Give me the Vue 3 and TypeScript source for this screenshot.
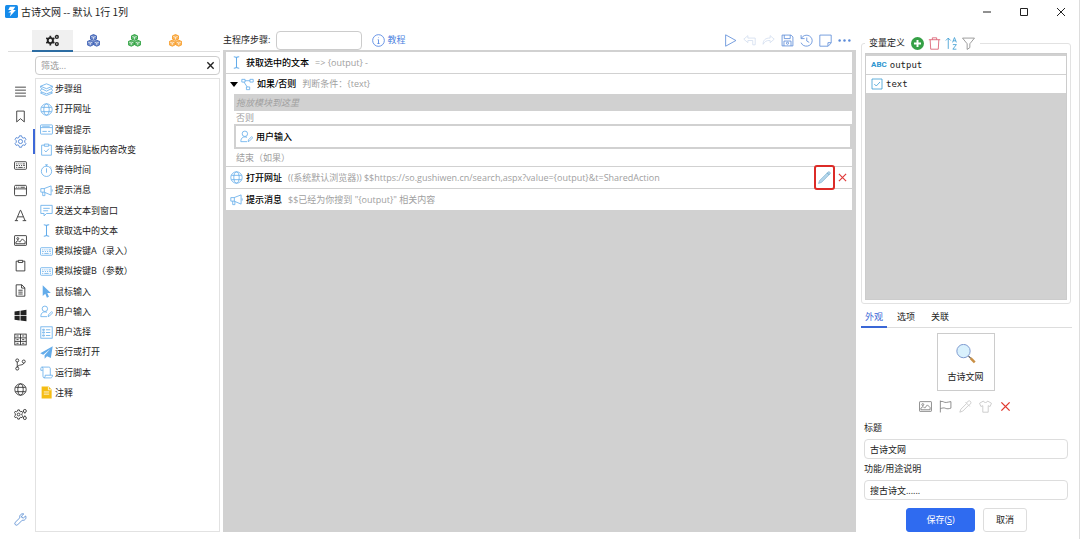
<script setup lang="ts">
import { ref } from 'vue'

const icons: Record<string, string> = {
  menu: '<path d="M2 4h20M2 9.500h20M2 15h20M2 20.500h20"/>',
  bookmark: '<path d="M5 2h14v20l-7-6-7 6z"/>',
  gear: '<path d="M10 1.500h4l.8 3 2.200 1.200 3-.9 2 3.500-2.200 2.200v2.900l2.200 2.300-2 3.500-3-.9-2.200 1.300-.8 3h-4l-.8-3L7 18.300l-3 .9-2-3.500 2.200-2.300v-2.900L2 8.300l2-3.500 3 .9 2.200-1.200z"/><circle cx="12" cy="12" r="3.800"/>',
  keyboard: '<rect x="1" y="5" width="22" height="14" rx="1.500"/><path d="M4 9h2M8 9h2M12 9h2M16 9h4M4 12h3M9 12h2M13 12h2M17 12h3M4 15.500h2M8 15.500h8M18 15.500h2"/>',
  window: '<rect x="1" y="2.500" width="22" height="19" rx="2"/><path d="M1 9h22M4 6h2M8 6h2M12 6h8"/>',
  letter: '<path d="M3.500 21.500L11.500 2.500h1l8 19M7 14.500h10M1.500 21.500h6M16 21.500h6.500"/>',
  image: '<rect x="1" y="3" width="22" height="18" rx="1"/><circle cx="7" cy="8.500" r="1.800"/><path d="M3.500 18v-3l4-3 3 3 5-6 5 5v4z"/>',
  clipboard: '<path d="M8 4H4v18h16V4h-4M8 2.500h8v4H8z"/>',
  doc: '<path d="M4 1.500h10.500L20 7v15.500H4zM14 1.500V7.500h6M8 11.500h8M8 15h8M8 18.500h8"/>',
  windows: '<path fill="currentColor" stroke="none" d="M1 4.500l9.500-1.300v8.200H1zM12 3l11-1.600v10H12zM1 12.800h9.500V21L1 19.700zM12 12.800h11v9.900L12 21.200z"/>',
  panel: '<rect x="1.500" y="2" width="21" height="20"/><path d="M1.500 9h21M1.500 15.500h21M12 2v20M4.500 5.500h4M15 5.500h4M4.500 12.200h4M15 12.200h4M4.500 19h4M15 19h4"/>',
  branch: '<circle cx="6" cy="4.500" r="2.800"/><circle cx="6" cy="19.500" r="2.800"/><circle cx="18" cy="6.500" r="2.800"/><path d="M6 7.300v9.400M18 9.300c0 5-11 2-11.500 7.500"/>',
  globe: '<circle cx="12" cy="12" r="10.500"/><ellipse cx="12" cy="12" rx="5" ry="10.500"/><path d="M2.500 8h19M2.500 16h19"/>',
  gears: '<path d="M7 3.500h3l.6 2.400 1.900 1 2.300-.7 1.500 2.600-1.800 1.800v2.800l1.800 1.800-1.500 2.600-2.300-.7-1.900 1-.6 2.400H7l-.6-2.400-1.900-1-2.300.7L.8 15.200l1.700-1.800v-2.800L.8 8.800l1.400-2.600 2.300.7 1.900-1z"/><circle cx="8.500" cy="12" r="2.600"/><circle cx="20" cy="5.500" r="2.800"/><circle cx="20" cy="18.500" r="2.800"/><path d="M20 8.300v2M20 13.700v2"/>',
  gearsBold: '<g stroke-width="3.500"><circle cx="8" cy="12" r="4.800"/></g><path stroke-width="3.200" d="M8 3v3M8 18v3M.5 7.600l3 1.600M.5 16.400l3-1.600M15.500 7.600l-3 1.600M15.500 16.400l-3-1.600"/><g stroke-width="2.600"><circle cx="20" cy="5.500" r="2.600"/><circle cx="20" cy="18.500" r="2.600"/></g>',
  cubes: '<path fill="currentColor" fill-opacity=".7" d="M12 1l5.500 2.400v6L12 11.800 6.500 9.400v-6zM6 11.500l5.500 2.400v6.100L6 22.500.5 20v-6.100zM18 11.500l5.500 2.400v6.100L18 22.500 12.500 20v-6.100z"/><path stroke="#fff" stroke-width="1.200" d="M8 4.500l4 1.700 4-1.700M12 6.200v4M2 15l4 1.700L10 15M6 16.700v4M14 15l4 1.700 4-1.700M18 16.700v4"/>',
  wrench: '<path d="M21.500 5.500l-4 3.500-3-.5L14 5.500l4-3.700c-4-1.500-8.500 2-7.200 7L2 17.500c-2 3 1.500 6.500 4.500 4.500l8.700-8.700c5 1.200 8.300-3.300 6.300-7.800zM4.500 19.500h.2"/>',
  layers: '<path d="M12 1.500l11 4.500-11 4.500L1 6zM1 6c0 3 1 4 3 5-2 1-3 1-3 2 0 2 1 3 3 4-2 .5-3 1-3 1.500l11 4.500 11-4.500c0-.5-1-1-3-1.500 2-1 3-2 3-4 0-1-1-1-3-2 2-1 3-2 3-5M4 11l8 4 8-4M4 17l8 3 8-3"/>',
  dialog: '<rect x="1" y="3.500" width="22" height="17" rx="1"/><path d="M1 8.500h22M4 6h14M4.500 15.500h8M15 15.500h4"/>',
  clipCheck: '<path d="M8 4H3v18.500h18V4h-5M8 2h8v4H8zM8 13.500l3 3 5.500-6"/>',
  timer: '<circle cx="12" cy="13.500" r="9.500"/><path d="M12 8v8M9.500 1.500h5M12 1.500v3M19 5l2 2"/>',
  horn: '<path d="M1.500 8.500v6.500h6l13 5.500v-17l-13 5zM5 15v6.500h4V15.500M8 8.500V15M22.500 10v4"/>',
  chat: '<path d="M1.500 2.500h21v15H12L7.500 22v-4.500h-6zM6 8h12M6 12.500h9"/>',
  ibeam: '<path stroke-width="1.900" d="M7 1.500c3 0 5 .5 5 2.500 0-2 2-2.500 5-2.500M12 4v16M7 22.500c3 0 5-.5 5-2.500 0 2 2 2.500 5 2.500"/>',
  cursor: '<path fill="currentColor" stroke="none" d="M5 .5v20l4.800-4.500 3 7.500 3.700-1.600-3-7.200h6.500z"/>',
  userEdit: '<circle cx="9" cy="7" r="5"/><path d="M13 13.500c-6-2-11.500 0-11.500 8H13M15 21.500l.6-3.300 6-6 2 2-6 6z"/>',
  options: '<rect x="1.500" y="1.500" width="21" height="21"/><path d="M5 6h3v2H5zM5 11h3v2H5zM5 16.500h3v2H5zM11 7h8M11 12h8M11 17.500h8"/>',
  plane: '<path fill="currentColor" stroke="none" d="M23.500.5L20 22l-7-3-4.500 4.500v-6.300L19 5.500 6 16 .5 13.500z"/>',
  scroll: '<path d="M5 8H1.500V5c0-4 4-4 4-.5V19c0 3.500 4 3.500 4 0v-2H23c0 3-1 5-3.500 5H7M3.500 2H16c2 0 3 1 3 3v12"/>',
  note: '<path fill="currentColor" stroke="none" d="M3 1h13l5.500 5.500V23H3z"/><path stroke="#fff" d="M15.500 1.500V7H21M7 11h10M7 15h10"/>',
  flow: '<path d="M1.500 2.500h6v5h-6zM16.500 2.500h6v5h-6zM10 16.500h6v5h-6zM7.500 5h9M5.500 7.500l6 9"/>',
  info: '<circle cx="12" cy="12" r="10.800"/><path d="M12 10.500v7M10 17.500h4M10.500 10.500H12M12 6.500v1"/>',
  play: '<path d="M3 1.500l19 10.500L3 22.500z"/>',
  undo: '<path d="M9 3L1.500 9.500 9 16v-4h9v8h4.500V7.500H9z"/>',
  redo: '<path d="M15 3l7.500 6.500L15 16v-4c-7-.5-10 2-13 7 0-7 4-12 13-11.500z"/>',
  save: '<path d="M2 2h16.500L22 5.500V22H2zM6 2v6.500h11V2M5.500 22v-9h13v9"/><circle cx="12" cy="17" r="2"/>',
  history: '<path d="M2 2v6.500h6.500M2.500 8C8-2 22.500 2 22.500 12.500 22 24 6 26 2 16M12.500 6.500v6.500l4.500 2.500"/>',
  sticky: '<path d="M1.500 2h21v14.500L17 22.500H1.500zM16.500 22V16H22"/>',
  dots: '<g fill="currentColor" stroke="none"><circle cx="3" cy="12" r="2.300"/><circle cx="12" cy="12" r="2.300"/><circle cx="21" cy="12" r="2.300"/></g>',
  plus: '<circle cx="12" cy="12" r="12" fill="currentColor" stroke="none"/><path stroke="#fff" stroke-width="3.600" d="M12 5.500v13M5.500 12h13"/>',
  trash: '<path d="M1.500 5h21M4 5l1 17.500h14L20 5M8 5V1.500h8V5"/>',
  sort: '<path d="M6 22V2M1.500 6.500L6 2l4.500 4.500M14 10l3.500-9L21 10M15 7h5M14.500 14H21l-6.500 8.500H21"/>',
  filter: '<path d="M1 2h22l-8.500 10.500v7L9.500 23V12.500z"/>',
  flag: '<path d="M2.500 1v22M2.500 3c5-2 7 2.500 11 1.500 3-.5 5-1 8.500-1.500v12c-4 1.500-7 1.500-9.500.5-3.500-1.500-6-1-10 .5"/>',
  dropper: '<path d="M14 5.500l3-3.500c3-2 6.500 2 4.500 5L18 10M12 4l8 8M14 6.500L3.500 17 1.500 22.500 7 20.500 17.500 10"/>',
  shirt: '<path d="M8 2L1 6l2.500 6L7 10.500V22.500h10V10.500l3.500 1.500L23 6l-7-4c-1 3.500-7 3.500-8 0z"/>',
  cross: '<path stroke-width="3" d="M3 3l18 18M21 3L3 21"/>',
  check: '<path d="M2 2h20v20H2zM6.500 12l4 4 7.500-8"/>',
  pencil: '<path fill="#b5d6ea" stroke="#7fb2d0" stroke-width="1.200" d="M1 23l2-5.500L19 1.500c2-1 4.500 1.500 3.500 3.500L6.500 21z"/><path stroke="#5d9fc4" d="M17 3.500L20.500 7"/>',
  magnifier: '<path stroke="#c98f45" stroke-width="3" d="M17.500 17l5 5"/><path stroke="#555" stroke-width="1.500" d="M15 14.500l2.500 2.500"/><circle cx="9" cy="8.500" r="8" fill="#d9f1fd" stroke="#7f9bd0" stroke-width="1.200"/>',
}

const rail = ['menu', 'bookmark', 'gear', 'keyboard', 'window', 'letter', 'image', 'clipboard', 'doc', 'windows', 'panel', 'branch', 'globe', 'gears']
const modules = [
  { icon: 'layers', name: '步骤组' },
  { icon: 'globe', name: '打开网址' },
  { icon: 'dialog', name: '弹窗提示' },
  { icon: 'clipCheck', name: '等待剪贴板内容改变' },
  { icon: 'timer', name: '等待时间' },
  { icon: 'horn', name: '提示消息' },
  { icon: 'chat', name: '发送文本到窗口' },
  { icon: 'ibeam', name: '获取选中的文本' },
  { icon: 'keyboard', name: '模拟按键A（录入）' },
  { icon: 'keyboard', name: '模拟按键B（参数）' },
  { icon: 'cursor', name: '鼠标输入' },
  { icon: 'userEdit', name: '用户输入' },
  { icon: 'options', name: '用户选择' },
  { icon: 'plane', name: '运行或打开' },
  { icon: 'scroll', name: '运行脚本' },
  { icon: 'note', name: '注释' },
]
const sources = [
  { icon: 'gearsBold', tone: 'dark' },
  { icon: 'cubes', tone: 'blue' },
  { icon: 'cubes', tone: 'green' },
  { icon: 'cubes', tone: 'orange' },
]
const tools = ['play', 'undo', 'redo', 'save', 'history', 'sticky', 'dots']
const varTools = ['plus', 'trash', 'sort', 'filter']
const looks = ['image', 'flag', 'dropper', 'shirt', 'cross']
const tabs = ['外观', '选项', '关联']

const source = ref(0)
const category = ref('gear')
const tab = ref('外观')
const query = ref('')
const program = ref('')
const title = ref('古诗文网')
const description = ref('搜古诗文......')
const urlDetail = '((系统默认浏览器)) $$https://so.gushiwen.cn/search,aspx?value={output}&t=SharedAction'
const messageDetail = '$$已经为你搜到 "{output}" 相关内容'
</script>

<template>
  <div class="app">
    <header class="titlebar">
      <svg class="logo" viewBox="0 0 24 24">
        <rect width="24" height="24" rx="3" fill="#168bea" />
        <path fill="#fff" d="M9 3h10l-4 6h5L9 21l2-7H6l6-5H6z" />
      </svg>
      <h1>古诗文网 -- 默认 1行 1列</h1>
      <div class="win">
        <button aria-label="最小化"><svg viewBox="0 0 10 10"><path d="M1 5h8" /></svg></button>
        <button aria-label="最大化"><svg viewBox="0 0 10 10"><path d="M1.500 1.500h7v7h-7z" /></svg></button>
        <button aria-label="关闭"><svg viewBox="0 0 10 10"><path d="M1 1l8 8M9 1L1 9" /></svg></button>
      </div>
    </header>

    <main class="body">
      <aside class="left">
        <nav class="sources">
          <button v-for="(s, i) in sources" :key="i" :class="[s.tone, { on: source === i }]" :aria-label="s.tone" @click="source = i">
            <svg class="ic" viewBox="0 0 24 24" v-html="icons[s.icon]" />
          </button>
        </nav>
        <div class="picker">
          <nav class="rail">
            <div class="cats">
              <button v-for="r in rail" :key="r" :class="{ on: category === r }" :aria-label="r" @click="category = r">
                <svg class="ic" viewBox="0 0 24 24" v-html="icons[r]" />
              </button>
            </div>
            <button class="settings" aria-label="设置"><svg class="ic" viewBox="0 0 24 24" v-html="icons.wrench" /></button>
          </nav>
          <div class="palette">
            <div class="search">
              <input v-model="query" type="text" placeholder="筛选..." aria-label="筛选" />
              <button aria-label="清除" @click="query = ''"><svg viewBox="0 0 10 10"><path d="M1.500 1.500l7 7M8.500 1.500l-7 7" /></svg></button>
            </div>
            <div class="modulebox">
              <ul class="modules">
                <li v-for="m in modules" :key="m.name">
                  <svg class="ic" :class="m.icon" viewBox="0 0 24 24" v-html="icons[m.icon]" />{{ m.name }}
                </li>
              </ul>
            </div>
          </div>
        </div>
      </aside>

      <section class="center">
        <div class="toolbar">
          <label for="program">主程序步骤:</label>
          <input id="program" v-model="program" type="text" />
          <a href="#"><svg class="ic" viewBox="0 0 24 24" v-html="icons.info" />教程</a>
          <div class="tools">
            <button v-for="t in tools" :key="t" :class="t" :aria-label="t"><svg class="ic" viewBox="0 0 24 24" v-html="icons[t]" /></button>
          </div>
        </div>
        <div class="steps">
          <div class="step">
            <svg class="ic" viewBox="0 0 24 24" v-html="icons.ibeam" />
            <b>获取选中的文本</b><span>=&gt; {output} -</span>
          </div>
          <div class="branch">
            <div class="step cond">
              <i class="caret"></i>
              <svg class="ic" viewBox="0 0 24 24" v-html="icons.flow" />
              <b>如果/否则</b><span>判断条件：{text}</span>
            </div>
            <div class="drop">拖放模块到这里</div>
            <div class="mark">否则</div>
            <div class="nested">
              <svg class="ic" viewBox="0 0 24 24" v-html="icons.userEdit" /><b>用户输入</b>
            </div>
            <div class="mark end">结束（如果）</div>
          </div>
          <div class="step">
            <svg class="ic" viewBox="0 0 24 24" v-html="icons.globe" />
            <b>打开网址</b><span>{{ urlDetail }}</span>
            <button class="edit" aria-label="编辑"><svg class="ic" viewBox="0 0 24 24" v-html="icons.pencil" /></button>
            <button class="remove" aria-label="删除"><svg viewBox="0 0 10 10"><path d="M1 1l8 8M9 1L1 9" /></svg></button>
          </div>
          <div class="step">
            <svg class="ic" viewBox="0 0 24 24" v-html="icons.horn" />
            <b>提示消息</b><span>{{ messageDetail }}</span>
          </div>
        </div>
      </section>

      <aside class="right">
        <fieldset>
          <legend>
            变量定义
            <button v-for="v in varTools" :key="v" :class="v" :aria-label="v"><svg class="ic" viewBox="0 0 24 24" v-html="icons[v]" /></button>
          </legend>
          <ul class="vars">
            <li><em>ABC</em>output</li>
            <li><svg class="ic" viewBox="0 0 24 24" v-html="icons.check" />text</li>
          </ul>
        </fieldset>
        <nav class="tabs">
          <button v-for="t in tabs" :key="t" :class="{ on: tab === t }" @click="tab = t">{{ t }}</button>
        </nav>
        <div class="preview">
          <svg class="ic" viewBox="0 0 24 24" v-html="icons.magnifier" />
          {{ title }}
        </div>
        <div class="looks">
          <button v-for="l in looks" :key="l" :class="l" :aria-label="l"><svg class="ic" viewBox="0 0 24 24" v-html="icons[l]" /></button>
        </div>
        <label for="title">标题</label>
        <input id="title" v-model="title" type="text" />
        <label for="desc">功能/用途说明</label>
        <input id="desc" v-model="description" type="text" />
        <div class="actions">
          <button class="primary">保存(<u>S</u>)</button>
          <button>取消</button>
        </div>
      </aside>
    </main>
  </div>
</template>

<style>
body {
  margin: 0;
  background: #fff;
}
</style>

<style scoped>
* {
  box-sizing: border-box;
}
.app {
  display: flex;
  flex-direction: column;
  min-height: 100vh;
  border-right: 1px solid #ddd;
  font: 9px/14px "Open Sans", "Noto Sans CJK SC", sans-serif;
  color: #222;
}
button {
  display: flex;
  align-items: center;
  justify-content: center;
  padding: 0;
  border: 0;
  background: none;
  font: inherit;
  color: inherit;
}
input {
  min-width: 0;
  padding: 0 5px;
  border: 1px solid #ccc;
  border-radius: 4px;
  background: #fff;
  font: inherit;
  color: inherit;
  outline: 0;
}
ul {
  margin: 0;
  padding: 0;
  list-style: none;
}
svg {
  flex: none;
  fill: none;
  stroke: currentColor;
}
.ic {
  width: 13px;
  height: 13px;
  stroke-width: 1.5;
}

.titlebar {
  display: flex;
  align-items: center;
  height: 23px;
  padding: 0 13px 0 5px;
}
.logo {
  width: 13px;
  height: 13px;
  margin-right: 3px;
  stroke: none;
}
h1 {
  flex: 1;
  margin: 0;
  font-family: "Noto Sans CJK SC", sans-serif;
  font-size: 10px;
  font-weight: 400;
}
.win {
  display: flex;
  gap: 27px;
}
.win svg {
  width: 10px;
  height: 10px;
}

.body {
  display: flex;
  flex: 1;
  padding: 7px 7px 8px 8px;
}
.left {
  display: flex;
  flex-direction: column;
  width: 212px;
}
.sources {
  display: flex;
  height: 22px;
  padding-left: 24px;
  border-bottom: 1px solid #ddd;
}
.sources button {
  width: 41px;
  height: 22px;
  border-bottom: 2px solid transparent;
}
.sources .on {
  border-color: #2d6da3;
  background: #f0f0f0;
}
.blue { color: #2f55b0; }
.green { color: #1c9a30; }
.orange { color: #f7961a; }

.picker {
  display: flex;
  flex: 1;
}
.rail {
  display: flex;
  flex-direction: column;
  justify-content: space-between;
  width: 27px;
  padding: 27px 0 6px;
}
.cats {
  display: grid;
  grid-auto-rows: 1fr;
  height: 348px;
}
.rail button {
  border-right: 2px solid transparent;
}
.rail .on {
  border-color: #3d68d8;
  color: #3d78d0;
}
.rail .settings {
  color: #4f86cf;
}
.palette {
  display: flex;
  flex: 1;
  flex-direction: column;
  gap: 3px;
  padding-top: 4px;
}
.search {
  position: relative;
  display: flex;
}
.search input {
  width: 100%;
  height: 19px;
}
.search input::placeholder {
  color: #999;
}
.search button {
  position: absolute;
  top: 0;
  right: 5px;
  bottom: 0;
}
.search svg {
  width: 9px;
  height: 9px;
  stroke-width: 1.5;
}
.modulebox {
  flex: 1;
  border: 1px solid #e2e2e2;
}
.modules {
  display: grid;
  grid-auto-rows: 1fr;
  height: 324px;
  padding-left: 4px;
}
.modules li {
  display: flex;
  align-items: center;
  gap: 2px;
}
.modules .ic,
.steps .ic {
  color: #64acea;
}
.modules .note {
  color: #f5bd13;
}

.center {
  display: flex;
  flex: 1;
  flex-direction: column;
  min-width: 0;
  margin: 0 5px 0 3px;
}
.toolbar {
  display: flex;
  align-items: center;
  height: 20px;
}
.toolbar input {
  width: 86px;
  height: 19px;
  margin: 0 10px 0 6px;
}
.toolbar a {
  display: flex;
  align-items: center;
  gap: 2px;
  color: #4a7fe0;
  text-decoration: none;
}
.tools {
  display: flex;
  gap: 6px;
  margin-left: auto;
  padding-right: 5px;
  color: #5a8ad8;
}
.tools .undo,
.tools .redo {
  color: #d3deef;
}
.steps {
  flex: 1;
  padding: 2px 4px 0 3px;
  background: #d1d1d1;
}
.step {
  display: flex;
  align-items: center;
  gap: 3px;
  height: 21px;
  margin-bottom: 1px;
  padding-left: 4px;
  background: #fff;
}
b {
  font-weight: 500;
  color: #000;
}
.step span {
  padding-left: 3px;
  color: #a0a0a0;
}
.branch {
  margin-bottom: 1px;
  background: #fff;
}
.cond {
  height: 20px;
  margin: 0;
}
.caret {
  border: 4px solid transparent;
  border-top: 5px solid #000;
  border-bottom: 0;
}
.drop {
  height: 17px;
  margin-left: 8px;
  padding-left: 2px;
  background: #d1d1d1;
  font-style: italic;
  line-height: 17px;
  color: #a0a0a0;
}
.mark {
  height: 13px;
  padding-left: 10px;
  color: #a0a0a0;
}
.nested {
  display: flex;
  align-items: center;
  gap: 3px;
  height: 25px;
  margin-left: 8px;
  padding-left: 4px;
  border: 2px solid #d1d1d1;
}
.end {
  height: 17px;
  line-height: 17px;
}
.edit {
  width: 21px;
  height: 25px;
  margin-left: auto;
  border: 2px solid #dc2b27;
  border-radius: 3px;
}
.remove {
  margin-right: 5px;
  color: #e03a3a;
}
.remove svg {
  width: 9px;
  height: 9px;
  stroke-width: 1.3;
}

.right {
  display: flex;
  flex-direction: column;
  width: 211px;
}
fieldset {
  min-width: 0;
  height: 268px;
  margin: 6px 1px 0 0;
  padding: 3px;
  border: 1px solid #e2e2e2;
  border-radius: 3px;
}
legend {
  display: flex;
  align-items: center;
  gap: 4px;
  padding: 0 5px 0 4px;
}
.plus {
  margin-left: 2px;
  color: #35a046;
}
.trash { color: #d9566a; }
.sort { color: #3a9bd2; }
.filter { color: #888; }
.vars {
  height: 247px;
  padding: 2px 0;
  border: 1px solid #ccc;
  background: #d1d1d1;
}
.vars li {
  display: flex;
  align-items: center;
  gap: 3px;
  height: 18px;
  margin-bottom: 1px;
  padding-left: 5px;
  background: #fff;
  font-family: "DejaVu Sans Mono", monospace;
}
.vars em {
  font: 700 8px/14px Roboto, sans-serif;
  color: #2f96d0;
}
.vars .ic {
  width: 12px;
  height: 12px;
  color: #2f96d0;
}
.tabs {
  display: flex;
  gap: 4px;
  height: 24px;
  border-bottom: 1px solid #ddd;
}
.tabs button {
  width: 30px;
  height: 24px;
  padding-top: 3px;
  border-bottom: 2px solid transparent;
}
.tabs .on {
  width: 26px;
  border-color: #3a67d6;
  color: #3a67d6;
}
.preview {
  display: flex;
  flex-direction: column;
  align-items: center;
  align-self: center;
  gap: 6px;
  width: 58px;
  height: 58px;
  margin: 5px 2px 0 0;
  padding-top: 10px;
  border: 1px solid #ccc;
}
.preview .ic {
  width: 20px;
  height: 20px;
}
.looks {
  display: flex;
  justify-content: center;
  gap: 7px;
  height: 30px;
  margin-right: 2px;
  color: #777;
}
.looks .dropper,
.looks .shirt {
  color: #c4c4c4;
}
.looks .cross {
  width: 13px;
  color: #e03a30;
}
.looks .cross .ic {
  width: 11px;
  height: 11px;
}
.right > label {
  height: 18px;
  padding-left: 3px;
  line-height: 14px;
}
.right > input {
  height: 20px;
  margin: 0 4px 3px 3px;
  border-color: #ddd;
}
.actions {
  display: flex;
  justify-content: center;
  gap: 8px;
  margin-top: 5px;
}
.actions button {
  width: 44px;
  height: 24px;
  border: 1px solid #ddd;
  border-radius: 3px;
}
.actions .primary {
  width: 69px;
  border-color: #2f6bf0;
  background: #2f6bf0;
  color: #fff;
}
</style>
